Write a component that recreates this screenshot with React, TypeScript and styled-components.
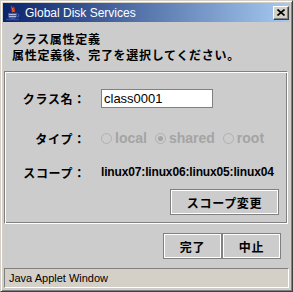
import styled, { createGlobalStyle } from "styled-components";

const GlobalStyle = createGlobalStyle`
  html, body {
    margin: 0;
    padding: 0;
    background: #ffffff;
  }
  * {
    box-sizing: border-box;
  }
`;

const JP = `"Noto Sans CJK JP", "Noto Sans", sans-serif`;
const LATIN = `"Liberation Sans", Arial, sans-serif`;

const Window = styled.div`
    width: 293px;
    height: 292px;
    display: flex;
    flex-direction: column;
    padding: 2px;
    background: #d4d0c8;
    border: 1px solid;
    border-color: #d4d0c8 #404040 #404040 #d4d0c8;
    box-shadow: inset 1px 1px #ffffff, inset -1px -1px #808080;
`

const TitleBar = styled.div`
    height: 19px;
    display: flex;
    align-items: center;
    padding: 0 1px 0 2px;
    gap: 4px;
    background: linear-gradient(to right, #0a246a, #a6caf0);

    .title {
        flex: 1;
        font-family: ${LATIN};
        font-size: 12px;
        color: #ffffff;
        white-space: nowrap;
    }
`

const CloseButton = styled.div`
    width: 16px;
    height: 14px;
    display: flex;
    align-items: center;
    justify-content: center;
    background: #d4d0c8;
    border: 1px solid;
    border-color: #ffffff #404040 #404040 #ffffff;
    box-shadow: inset -1px -1px #808080;
`

const Content = styled.div`
    flex: 1;
    display: flex;
    flex-direction: column;
    background: #cccccc;
`

const Header = styled.div`
    padding: 9px 0 0 9px;
    font-family: ${JP};
    font-size: 12px;
    font-weight: 700;
    line-height: 16px;
    letter-spacing: 0.7px;
    color: #000000;
`

const Panel = styled.div`
    margin: 8px 2px 0 1px;
    padding: 16px 8px 8px 6px;
    display: flex;
    flex-direction: column;
    border: 1px solid;
    border-color: #808080 #ffffff #ffffff #808080;
    box-shadow: inset 1px 1px #ffffff, inset -1px -1px #808080;
`

const Row = styled.div<{ $top: number }>`
    height: 20px;
    margin-top: ${(p) => p.$top}px;
    display: grid;
    grid-template-columns: 75px auto;
    column-gap: 15px;
    align-items: center;
`

const Label = styled.span`
    text-align: right;
    font-family: ${JP};
    font-size: 12px;
    font-weight: 700;
    letter-spacing: 0.7px;
    color: #000000;
    white-space: nowrap;
`

const TextField = styled.div`
    width: 112px;
    height: 19px;
    padding: 0 2px;
    display: flex;
    align-items: center;
    background: #ffffff;
    border: 1px solid #808080;
    font-family: ${LATIN};
    font-size: 13px;
    color: #000000;
`

const RadioGroup = styled.div`
    display: flex;
    align-items: center;
    gap: 8px;
`

const Radio = styled.label`
    display: flex;
    align-items: center;
    gap: 3px;
    font-family: ${LATIN};
    font-size: 14px;
    font-weight: 700;
    color: #a4a4a4;
`

const ScopeValue = styled.span`
    font-family: ${LATIN};
    font-size: 12px;
    font-weight: 700;
    letter-spacing: -0.15px;
    color: #000000;
    white-space: nowrap;
`

const Button = styled.div<{ $width: number }>`
    width: ${(p) => p.$width}px;
    height: 26px;
    display: flex;
    align-items: center;
    justify-content: center;
    border: 1px solid #808080;
    box-shadow: inset 1px 1px #ffffff, inset -1px -1px #ffffff;
    font-family: ${JP};
    font-size: 12px;
    font-weight: 700;
    letter-spacing: 0.7px;
    color: #000000;
`

const ScopeButton = styled(Button)`
    margin-top: 7px;
    align-self: flex-end;
`

const ButtonRow = styled.div`
    margin-top: 9px;
    padding-right: 9px;
    display: flex;
    justify-content: flex-end;
`

const StatusBar = styled.div`
    height: 20px;
    margin: 9px 1px 1px 1px;
    padding-left: 4px;
    display: flex;
    align-items: center;
    background: #d4d0c8;
    border: 1px solid;
    border-color: #808080 #ffffff #ffffff #808080;
    font-family: ${LATIN};
    font-size: 11px;
    color: #000000;
`

const JavaCup = () => (
    <svg width="16" height="16" viewBox="0 0 16 16">
        <path d="M7 1 C5 3 9 4 7 7 M9 2 C8 4 11 5 9 7" stroke="#e03020" strokeWidth="1.4" fill="none" />
        <path d="M8 3 C7 5 9 5 8 7" stroke="#f0a030" strokeWidth="1" fill="none" />
        <path d="M3 8 H12 V11 C12 13 10 14 7.5 14 C5 14 3 13 3 11 Z" fill="#4a5aa8" />
        <path d="M4 9.5 H11 M4 11.5 H11" stroke="#c8d0f0" strokeWidth="0.8" />
        <path d="M12 9 C14.5 9 14.5 12 12 12" stroke="#4a5aa8" strokeWidth="1.2" fill="none" />
        <path d="M1 14.5 H14" stroke="#3a4a98" strokeWidth="1.5" />
    </svg>
);

const CloseIcon = () => (
    <svg width="8" height="7" viewBox="0 0 8 7">
        <path d="M0.5 0.5 L7.5 6.5 M7.5 0.5 L0.5 6.5" stroke="#000000" strokeWidth="1.6" />
    </svg>
);

const RadioMark = ({ checked }: { checked?: boolean }) => (
    <svg width="11" height="11" viewBox="0 0 11 11">
        <circle cx="5.5" cy="5.5" r="5" stroke="#b0b0b0" strokeWidth="1" fill="none" />
        {checked && <circle cx="5.5" cy="5.5" r="2.5" fill="#a4a4a4" />}
    </svg>
);

const types = [
    { name: "local" },
    { name: "shared", checked: true },
    { name: "root" },
];

const App = () => {
    return (
        <>
            <GlobalStyle />
            <Window>
                <TitleBar>
                    <JavaCup />
                    <span className="title">Global Disk Services</span>
                    <CloseButton><CloseIcon /></CloseButton>
                </TitleBar>

                <Content>
                    <Header>
                        <div>クラス属性定義</div>
                        <div>属性定義後、完了を選択してください。</div>
                    </Header>

                    <Panel>
                        <Row $top={0}>
                            <Label>クラス名：</Label>
                            <TextField>class0001</TextField>
                        </Row>
                        <Row $top={20}>
                            <Label>タイプ：</Label>
                            <RadioGroup>
                                {types.map((t) => (
                                    <Radio key={t.name}>
                                        <RadioMark checked={t.checked} />
                                        {t.name}
                                    </Radio>
                                ))}
                            </RadioGroup>
                        </Row>
                        <Row $top={14}>
                            <Label>スコープ：</Label>
                            <ScopeValue>linux07:linux06:linux05:linux04</ScopeValue>
                        </Row>
                        <ScopeButton $width={109}>スコープ変更</ScopeButton>
                    </Panel>

                    <ButtonRow>
                        <Button $width={59}>完了</Button>
                        <Button $width={59}>中止</Button>
                    </ButtonRow>

                    <StatusBar>Java Applet Window</StatusBar>
                </Content>
            </Window>
        </>
    )
}

export default App;
